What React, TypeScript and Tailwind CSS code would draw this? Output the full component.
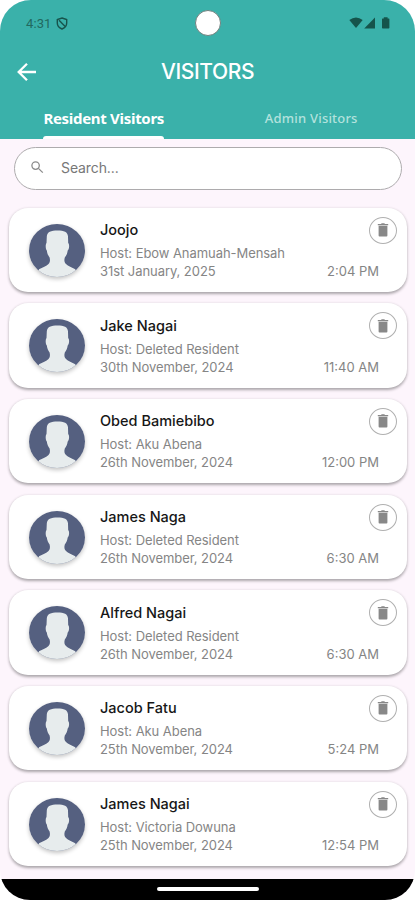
const visitors = [
  { name: 'Joojo', host: 'Ebow Anamuah-Mensah', date: '31st January, 2025', time: '2:04 PM' },
  { name: 'Jake Nagai', host: 'Deleted Resident', date: '30th November, 2024', time: '11:40 AM' },
  { name: 'Obed Bamiebibo', host: 'Aku Abena', date: '26th November, 2024', time: '12:00 PM' },
  { name: 'James Naga', host: 'Deleted Resident', date: '26th November, 2024', time: '6:30 AM' },
  { name: 'Alfred Nagai', host: 'Deleted Resident', date: '26th November, 2024', time: '6:30 AM' },
  { name: 'Jacob Fatu', host: 'Aku Abena', date: '25th November, 2024', time: '5:24 PM' },
  { name: 'James Nagai', host: 'Victoria Dowuna', date: '25th November, 2024', time: '12:54 PM' },
];

function StatusBar() {
  return (
    <div className="relative flex h-[46px] items-center justify-between pl-[26px] pr-[25px] text-[#21695f]">
      <div className="flex items-center gap-[5px]">
        <span className="font-['Roboto',sans-serif] text-[13px] leading-none tracking-[0.1px]">4:31</span>
        <svg width="12" height="13" viewBox="0 0 12 13" fill="none" stroke="#17544c" strokeWidth="1.4">
          <path d="M6 1 L10.7 2.6 V6 C10.7 9 9 10.8 6 12 C3 10.8 1.3 9 1.3 6 V2.6 Z" />
          <path d="M3 3.2 L9.2 9.6" />
        </svg>
      </div>
      <div className="absolute left-[195px] top-[10px] h-[26px] w-[26px] rounded-full border border-[#71817e] bg-white" />
      <svg width="41" height="12" viewBox="0 0 41 12" fill="#15544b">
        <path d="M0.3 3 Q7 -2.2 13.7 3 L7 11 Z" />
        <path d="M26 0.5 V11.5 H15.2 Z" />
        <path d="M34.8 0.3 H38.6 V1.5 H39.9 Q40.4 1.5 40.4 2.1 V10.8 Q40.4 11.6 39.6 11.6 H33.8 Q33 11.6 33 10.8 V2.1 Q33 1.5 33.6 1.5 H34.8 Z" />
      </svg>
    </div>
  );
}

function Avatar() {
  return (
    <div className="mt-[16px] h-[53px] w-[56px] shrink-0 rounded-[50%] shadow-[0_2px_4px_rgba(0,0,0,0.24)]">
      <svg width="56" height="53" viewBox="0 0 56 53">
        <defs>
          <clipPath id="portrait">
            <ellipse cx="28" cy="26.5" rx="28" ry="26.5" />
          </clipPath>
        </defs>
        <g clipPath="url(#portrait)">
          <rect width="56" height="53" fill="#556080" />
          <path
            fill="#e7eced"
            d="M28.5 6.5 C22 6.5 18 8 17.8 12.5 L17.5 19 C16.3 20.5 16.5 25 17.8 26.5 C18.3 30 19.2 31.5 20.6 33.5 C21.3 36.5 21 38.5 19.5 40 C17.5 42 13.5 43.5 10 45.3 L8 53 H48 L46.3 45.3 C43 43.5 39 42 37 40 C35.3 38.3 35 36.5 35.8 33.5 C37.3 31.5 38.2 30 38.7 26.5 C40.4 25 40.6 20.5 39.2 19 L39 12.5 C38.8 8 35 6.5 28.5 6.5 Z"
          />
        </g>
      </svg>
    </div>
  );
}

function DeleteButton() {
  return (
    <button className="flex h-[27px] w-[28px] items-center justify-center rounded-[50%] border border-[#b0b0b0]">
      <svg width="12" height="14" viewBox="0 0 12 14" fill="#888888">
        <path d="M0.8 1 H4 L4.7 0.2 H7.3 L8 1 H11.2 V2.3 H0.8 Z" />
        <path d="M1.6 2.8 H10.4 V12.6 Q10.4 13.5 9.5 13.5 H2.5 Q1.6 13.5 1.6 12.6 Z" />
      </svg>
    </button>
  );
}

function VisitorCard({ name, host, date, time }: (typeof visitors)[number]) {
  return (
    <li className="flex h-[84.5px] rounded-[19px] bg-white pl-5 pr-[10px] shadow-[0_1.5px_3px_rgba(0,0,0,0.33)]">
      <Avatar />
      <div className="ml-[15px] flex-1 whitespace-nowrap pt-[12.5px] text-[13px] leading-[18px] tracking-[-0.06px] text-[#858585]">
        <h2 className="mb-[5px] text-[14.5px] font-medium leading-[19px] tracking-normal text-[#161616]">{name}</h2>
        <p>Host: {host}</p>
        <p>{date}</p>
      </div>
      <div className="flex w-[80px] flex-col items-end justify-between pb-[12px] pt-[9px]">
        <DeleteButton />
        <span className="mr-[18px] whitespace-nowrap text-[13px] leading-[18px] text-[#858585]">{time}</span>
      </div>
    </li>
  );
}

export default function App() {
  return (
    <div className="h-[900px] w-[415px] overflow-hidden bg-white font-['Inter',sans-serif]">
      <div className="flex h-full flex-col overflow-hidden rounded-t-[31px] rounded-b-[30px] bg-[#fdf5fc]">
        <header className="h-[139px] shrink-0 bg-[#3ab1aa] text-white">
          <StatusBar />
          <div className="flex h-[51px] items-center pl-[17px]">
            <svg width="20" height="20" viewBox="0 0 20 20" fill="none" stroke="white" strokeWidth="2.3">
              <path d="M19 10 H2 M10 1.7 L1.7 10 L10 18.3" />
            </svg>
            <h1 className="ml-[124px] text-[21px] font-medium leading-none tracking-[-0.4px]">VISITORS</h1>
          </div>
          <nav className="flex h-[42px] font-['Noto_Sans',sans-serif]">
            <div className="flex w-1/2 flex-col items-center justify-between pt-[11px]">
              <span className="whitespace-nowrap text-[15px] font-bold leading-[20px] tracking-[-0.3px]">Resident Visitors</span>
              <span className="h-[3px] w-[121px] rounded-t-[3px] bg-white" />
            </div>
            <div className="flex w-1/2 justify-center pt-[11px]">
              <span className="whitespace-nowrap text-[13px] font-medium leading-[20px] tracking-[0.2px] text-[#b3e2dd]">Admin Visitors</span>
            </div>
          </nav>
        </header>
        <main className="min-h-0 flex-1 overflow-hidden">
          <div className="ml-[14px] mt-[7.5px] flex h-[43px] w-[388px] items-center rounded-full border border-[#adabad] bg-white pb-[2px] pl-[15px] text-[14px] tracking-[-0.1px] text-[#777]">
            <svg width="14" height="14" viewBox="0 0 14 14" fill="none" stroke="#8b8b8b" strokeWidth="1.3">
              <circle cx="5.6" cy="5.6" r="3.7" />
              <path d="M8.4 8.4 L12.8 12.6" />
            </svg>
            <span className="ml-[17px]">Search...</span>
          </div>
          <ul className="ml-[9px] mt-[18px] flex w-[398px] flex-col gap-[11.2px]">
            {visitors.map((v) => (
              <VisitorCard key={v.name} {...v} />
            ))}
          </ul>
        </main>
        <footer className="flex h-[21px] shrink-0 justify-center bg-black pt-[8px]">
          <div className="h-[4px] w-[102px] rounded-full bg-white" />
        </footer>
      </div>
    </div>
  );
}
